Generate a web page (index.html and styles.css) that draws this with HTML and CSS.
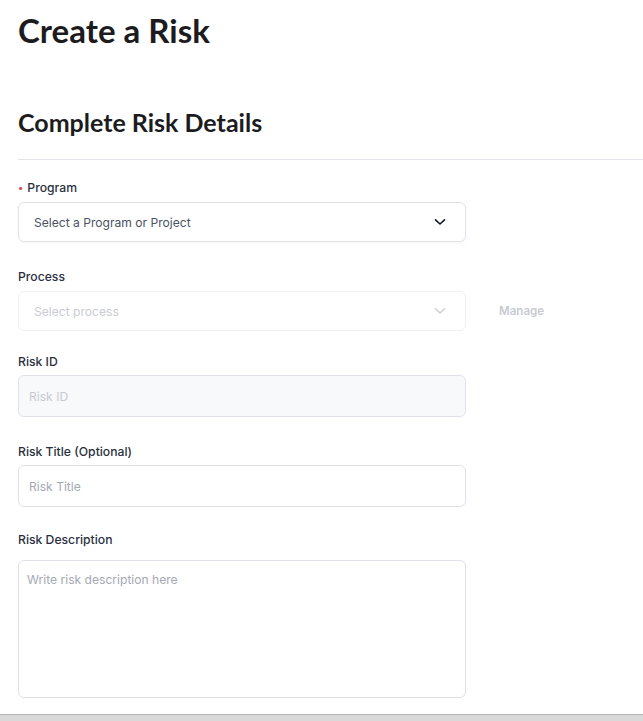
FILE: index.html
```html
<!DOCTYPE html>
<html>
<head>
<meta charset="utf-8">
<link rel="stylesheet" href="styles.css">
</head>
<body>
<div class="page">
  <h1 class="page-title">Create a Risk</h1>
  <h2 class="section-title">Complete Risk Details</h2>
  <hr class="divider">
  <form class="form">
    <div class="field field-program">
      <label class="label"><span class="req">•</span>Program</label>
      <div class="row">
        <div class="select">
          <span class="select-text">Select a Program or Project</span>
          <svg class="chev" width="12" height="8" viewBox="0 0 12 8"><path d="M1.5 1.8 L6 6 L10.5 1.8" fill="none" stroke="#111827" stroke-width="1.6" stroke-linecap="round" stroke-linejoin="round"/></svg>
        </div>
      </div>
    </div>
    <div class="field field-process">
      <label class="label">Process</label>
      <div class="row">
        <div class="select disabled">
          <span class="select-text">Select process</span>
          <svg class="chev" width="12" height="8" viewBox="0 0 12 8"><path d="M1.5 1.8 L6 6 L10.5 1.8" fill="none" stroke="#c9ccd3" stroke-width="1.4" stroke-linecap="round" stroke-linejoin="round"/></svg>
        </div>
        <span class="manage">Manage</span>
      </div>
    </div>
    <div class="field field-id">
      <label class="label label-tight">Risk ID</label>
      <div class="input readonly">Risk ID</div>
    </div>
    <div class="field field-title">
      <label class="label label-tight">Risk Title (Optional)</label>
      <div class="input">Risk Title</div>
    </div>
    <div class="field field-desc">
      <label class="label label-loose">Risk Description</label>
      <div class="textarea">Write risk description here</div>
    </div>
  </form>
</div>
<div class="bottom-bar"></div>
</body>
</html>
```

FILE: styles.css
```css
html, body {
  margin: 0;
  padding: 0;
  background: #ffffff;
}
body {
  font-family: "Inter", "Noto Sans", sans-serif;
  height: 721px;
  overflow: hidden;
  position: relative;
}
.page {
  padding-left: 18px;
}
.page-title {
  font-family: "Lato", "Open Sans", sans-serif;
  font-weight: 700;
  font-size: 33px;
  line-height: 40px;
  color: #1c1c1f;
  margin: 0;
  padding-top: 10px;
}
.section-title {
  font-family: "Lato", "Open Sans", sans-serif;
  font-weight: 700;
  font-size: 25px;
  line-height: 30px;
  color: #1c1c1f;
  margin: 57px 0 0 0;
}
.divider {
  border: none;
  border-top: 1px solid #e3e3ea;
  margin: 22px 0 0 0;
}
.form {
  padding-top: 19px;
  width: 448px;
}
.label {
  display: block;
  font-size: 12.2px;
  font-weight: 500;
  color: #2b3040;
  line-height: 18px;
  margin-bottom: 5px;
}
.label-tight {
  margin-bottom: 4px;
}
.label-loose {
  margin-bottom: 11px;
}
.req {
  color: #e0474c;
  font-size: 10px;
  margin-right: 4px;
  position: relative;
  top: -1px;
}
.field-process {
  margin-top: 26px;
}
.field-id {
  margin-top: 22px;
}
.field-title {
  margin-top: 26px;
}
.field-desc {
  margin-top: 24px;
}
.row {
  display: flex;
  align-items: center;
  width: 620px;
}
.select {
  box-sizing: border-box;
  width: 448px;
  height: 40px;
  border: 1px solid #dfe2ea;
  border-radius: 6px;
  display: flex;
  align-items: center;
  justify-content: space-between;
  padding: 0 19px 0 15px;
  box-shadow: 0 1px 2px rgba(16, 24, 40, 0.04);
  flex: none;
}
.select-text {
  font-size: 12.1px;
  color: #4a5264;
}
.select.disabled {
  border-color: #f0f1f4;
  box-shadow: none;
}
.select.disabled .select-text {
  color: #c9ccd3;
}
.manage {
  margin-left: 33px;
  font-size: 11.6px;
  font-weight: 600;
  color: #c8cbd1;
}
.input {
  box-sizing: border-box;
  width: 448px;
  height: 42px;
  border: 1px solid #dfe2ea;
  border-radius: 6px;
  padding: 0 10px;
  display: flex;
  align-items: center;
  font-size: 12.1px;
  color: #a4a9b3;
}
.input.readonly {
  background: #f8f9fb;
  color: #c6cad3;
}
.textarea {
  box-sizing: border-box;
  width: 448px;
  height: 138px;
  border: 1px solid #dfe2ea;
  border-radius: 6px;
  padding: 10px 8px;
  font-size: 12.1px;
  color: #a4a9b3;
  line-height: 18px;
}
.bottom-bar {
  position: absolute;
  left: 0;
  right: 0;
  bottom: 0;
  height: 6px;
  background: #d9d9d9;
  border-top: 1px solid #b5b5b5;
}
```
